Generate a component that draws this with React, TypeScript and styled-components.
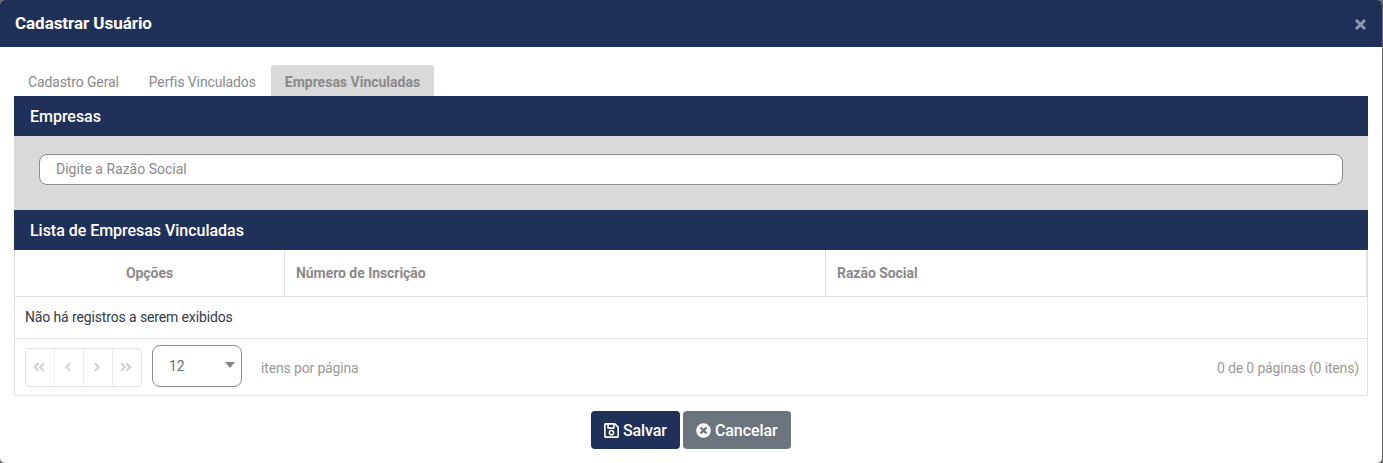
import React from "react";
import styled, { createGlobalStyle } from "styled-components";
import {
  FaTimesCircle,
  FaRegSave,
  FaAngleDoubleLeft,
  FaAngleDoubleRight,
  FaAngleLeft,
  FaAngleRight,
} from "react-icons/fa";

const navy = "#1f3158";

const GlobalStyle = createGlobalStyle`
  html, body {
    margin: 0;
    height: 100%;
    background: #6b6b6b;
    font-family: Roboto, "Liberation Sans", sans-serif;
    overflow: hidden;
  }
`;

const Modal = styled.div`
  width: 1382px;
  height: 463px;
  background: #fff;
  border-radius: 5px;
  overflow: hidden;
  display: flex;
  flex-direction: column;
`;

const Header = styled.header`
  height: 47px;
  flex-shrink: 0;
  background: ${navy};
  display: flex;
  align-items: center;
  justify-content: space-between;
  padding: 0 15px;
  color: #fff;
`;

const Title = styled.h5`
  margin: 0 0 1px;
  font-size: 17px;
  font-weight: 700;
  letter-spacing: -0.05px;
`;

const Close = styled.button`
  border: 0;
  background: none;
  padding: 0;
  margin: 2px 0 0 0;
  width: 13px;
  height: 13px;
  display: flex;
  color: #8d97ac;
`;

const Body = styled.div`
  padding: 18px 14px 0;
  display: flex;
  flex-direction: column;
`;

const Tabs = styled.nav`
  display: flex;
  height: 31px;
`;

const Tab = styled.a<{ $active?: boolean }>`
  padding: 2px 14px 0;
  display: flex;
  align-items: center;
  font-size: 14px;
  color: #8a8a8a;
  border-radius: 3px 3px 0 0;
  background: ${(p) => (p.$active ? "#d9d9d9" : "transparent")};
  font-weight: ${(p) => (p.$active ? 700 : 400)};
  letter-spacing: ${(p) => (p.$active ? "0" : "-0.13px")};

  &:nth-child(2) {
    margin-left: 1px;
    padding: 2px 15px 0;
  }
`;

const SectionBar = styled.div`
  height: 40px;
  background: ${navy};
  color: #fff;
  display: flex;
  align-items: center;
  padding: 0 16px;
  font-size: 16px;
  font-weight: 500;
  letter-spacing: -0.03px;
`;

const SearchPanel = styled.div`
  height: 74px;
  box-sizing: border-box;
  background: #d9d9d9;
  padding: 18px 25px 0;
`;

const SearchInput = styled.input`
  display: block;
  width: 100%;
  height: 31px;
  box-sizing: border-box;
  border: 1px solid #8c8c8c;
  border-radius: 8px;
  background: #fff;
  padding: 0 16px 2px;
  font: 14px Roboto, sans-serif;
  &::placeholder {
    color: #8a8a8a;
    opacity: 1;
  }
`;

const Grid = styled.div`
  border: 1px solid #dee2e6;
  border-top: 0;
`;

const HeadRow = styled.div`
  height: 47px;
  display: grid;
  grid-template-columns: 270px 541px 1fr;
  border-bottom: 1px solid #dee2e6;
  box-sizing: border-box;
`;

const HeadCell = styled.div<{ $center?: boolean }>`
  display: flex;
  align-items: center;
  justify-content: ${(p) => (p.$center ? "center" : "flex-start")};
  padding: 0 11px;
  font-size: 14px;
  font-weight: 700;
  color: #8a8a8a;
  border-right: 1px solid #dee2e6;
  letter-spacing: -0.05px;
`;

const EmptyRow = styled.div`
  height: 42px;
  box-sizing: border-box;
  display: flex;
  align-items: center;
  padding: 0 10px 2px;
  font-size: 14px;
  letter-spacing: -0.13px;
  color: #343a4a;
  border-bottom: 1px solid #dee2e6;
`;

const Pager = styled.div`
  height: 56px;
  display: flex;
  align-items: center;
  padding: 0 8px 0 10px;
  font-size: 14px;
  letter-spacing: -0.15px;
  color: #9a9a9a;
`;

const PageButtons = styled.div`
  display: flex;
  height: 39px;
  border: 1px solid #e2e2e2;
  border-radius: 4px;
  box-sizing: border-box;
`;

const PageButton = styled.span`
  width: 29px;
  box-sizing: border-box;
  padding-right: 2px;
  display: flex;
  align-items: center;
  justify-content: center;
  color: #d4d4d4;
  border-left: 1px solid #eeeeee;
  &:first-child {
    width: 28px;
    border-left: 0;
  }
`;

const SizeSelect = styled.div`
  margin: 0 0 2px 10px;
  width: 90px;
  height: 42px;
  box-sizing: border-box;
  border: 1px solid #8c8c8c;
  border-radius: 8px;
  display: flex;
  align-items: center;
  justify-content: space-between;
  padding: 0 6px 1px 16px;
  color: #6f6f6f;
`;

const Caret = styled.span`
  width: 0;
  height: 0;
  margin-bottom: 2px;
  border-left: 5.5px solid transparent;
  border-right: 5.5px solid transparent;
  border-top: 6px solid #858585;
`;

const PerPage = styled.span`
  margin-left: 19px;
  padding-top: 2px;
`;

const Info = styled.span`
  margin-left: auto;
  padding-top: 2px;
`;

const Footer = styled.footer`
  display: flex;
  justify-content: center;
  gap: 3px;
  margin-top: 15px;
`;

const ActionButton = styled.button<{ $variant: "primary" | "secondary" }>`
  height: 38px;
  width: ${(p) => (p.$variant === "primary" ? "89px" : "108px")};
  border: 0;
  border-radius: 4px;
  padding: 0 0 0 ${(p) => (p.$variant === "primary" ? "12px" : "13px")};
  display: flex;
  align-items: center;
  gap: ${(p) => (p.$variant === "primary" ? "3px" : "4px")};
  font: 500 16px Roboto, sans-serif;
  letter-spacing: -0.1px;
  color: #fff;
  background: ${(p) => (p.$variant === "primary" ? navy : "#6c757d")};

  svg {
    flex-shrink: 0;
  }
`;

export default function App() {
  return (
    <>
      <GlobalStyle />
      <Modal>
        <Header>
          <Title>Cadastrar Usuário</Title>
          <Close aria-label="Fechar">
            <svg viewBox="0 0 13 13" width="13" height="13">
              <path d="M2 2l9 9M11 2l-9 9" stroke="currentColor" strokeWidth="3" />
            </svg>
          </Close>
        </Header>
        <Body>
          <Tabs>
            <Tab>Cadastro Geral</Tab>
            <Tab>Perfis Vinculados</Tab>
            <Tab $active>Empresas Vinculadas</Tab>
          </Tabs>
          <SectionBar>Empresas</SectionBar>
          <SearchPanel>
            <SearchInput placeholder="Digite a Razão Social" />
          </SearchPanel>
          <SectionBar>Lista de Empresas Vinculadas</SectionBar>
          <Grid>
            <HeadRow>
              <HeadCell $center>Opções</HeadCell>
              <HeadCell>Número de Inscrição</HeadCell>
              <HeadCell>Razão Social</HeadCell>
            </HeadRow>
            <EmptyRow>Não há registros a serem exibidos</EmptyRow>
            <Pager>
              <PageButtons>
                <PageButton><FaAngleDoubleLeft size={14} /></PageButton>
                <PageButton><FaAngleLeft size={14} /></PageButton>
                <PageButton><FaAngleRight size={14} /></PageButton>
                <PageButton><FaAngleDoubleRight size={14} /></PageButton>
              </PageButtons>
              <SizeSelect>
                12
                <Caret />
              </SizeSelect>
              <PerPage>itens por página</PerPage>
              <Info>0 de 0 páginas (0 itens)</Info>
            </Pager>
          </Grid>
          <Footer>
            <ActionButton $variant="primary">
              <FaRegSave size={17} />
              Salvar
            </ActionButton>
            <ActionButton $variant="secondary">
              <FaTimesCircle size={15} />
              Cancelar
            </ActionButton>
          </Footer>
        </Body>
      </Modal>
    </>
  );
}
